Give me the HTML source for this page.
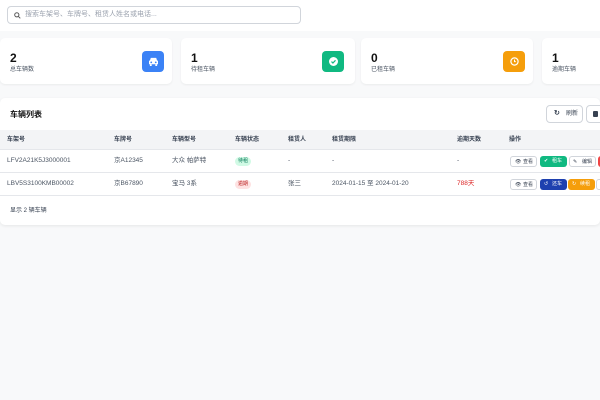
<!DOCTYPE html>
<html><head><meta charset="utf-8"><style>
*{box-sizing:border-box;margin:0;padding:0}
body{width:600px;height:400px;overflow:hidden;background:#f8f9fa;font-family:"Liberation Sans","Noto Sans CJK SC",sans-serif;color:#1f2937;position:relative}
.top{position:absolute;left:0;top:0;width:600px;height:31px;background:#fff}
.search{position:absolute;left:7px;top:6px;width:294px;height:18px;border:1px solid #d1d5db;border-radius:4px;background:#fff;font-size:7px;color:#9ca3af;padding-left:17px;line-height:16px}
.search svg{position:absolute;left:6px;top:5px}
.card{position:absolute;top:38px;height:46px;background:#fff;border-radius:5px;box-shadow:0 1px 2px rgba(0,0,0,.06)}
.card .n{position:absolute;left:10px;top:13px;font-size:12px;line-height:14px;font-weight:bold;color:#111}
.card .l{position:absolute;left:10px;top:28px;font-size:6px;line-height:8px;color:#4b5563}
.card .ic{position:absolute;left:142px;top:13px;width:22px;height:21px;border-radius:4px;display:flex;align-items:center;justify-content:center}
.panel{position:absolute;left:0;top:98px;width:600px;height:127px;background:#fff;border-radius:5px;box-shadow:0 1px 3px rgba(0,0,0,.08)}
.title{position:absolute;left:10px;top:12px;font-size:8px;line-height:10px;font-weight:bold;color:#111}
.btn{position:absolute;top:7px;height:18px;border:1px solid #d1d5db;border-radius:4px;background:#fff;font-size:6px;color:#374151;line-height:16px;padding-left:19px}
.thead{position:absolute;left:0;top:32px;width:600px;height:20px;background:#f3f4f6;border-bottom:1px solid #e5e7eb}
.row{position:absolute;left:0;width:600px;height:23px;border-bottom:1px solid #e5e7eb}
.c{position:absolute;font-size:6.5px;line-height:8px;color:#4b5563;top:7px;white-space:nowrap}
.thead .c{top:6px;font-weight:bold;color:#374151;font-size:6px}
.tag{position:absolute;top:7px;height:9px;border-radius:5px;font-size:5px;line-height:9px;padding:0 3px}
.ab{position:absolute;top:6px;height:11px;border-radius:3px;font-size:5px;line-height:10px;padding-left:12px;width:27px;color:#fff}
.ab span{line-height:10px}
.foot{position:absolute;left:10px;top:109px;font-size:6px;line-height:8px;color:#374151}
</style></head><body>
<div class="top"><div class="search"><svg width="7" height="7" viewBox="0 0 10 10"><circle cx="4" cy="4" r="3" fill="none" stroke="#555" stroke-width="1.4"/><path d="M6.3 6.3L9 9" stroke="#555" stroke-width="1.4"/></svg>搜索车架号、车牌号、租赁人姓名或电话...</div></div>

<div class="card" style="left:0;width:172px"><div class="n">2</div><div class="l">总车辆数</div><div class="ic" style="background:#3b82f6;left:142px"><svg width="11" height="9" viewBox="0 0 12 10"><path d="M2 4L3 1h6l1 3h1v4H1V4z" fill="#fff"/><circle cx="3.5" cy="6" r="1" fill="#3b82f6"/><circle cx="8.5" cy="6" r="1" fill="#3b82f6"/><rect x="2" y="8" width="2" height="2" fill="#fff"/><rect x="8" y="8" width="2" height="2" fill="#fff"/></svg></div></div>
<div class="card" style="left:181px;width:174px"><div class="n">1</div><div class="l">待租车辆</div><div class="ic" style="background:#10b981;left:141px"><svg width="9" height="9"><circle cx="4.5" cy="4.5" r="4.5" fill="#fff"/><path d="M2.5 4.6l1.4 1.4 2.6-2.7" stroke="#10b981" stroke-width="1.2" fill="none"/></svg></div></div>
<div class="card" style="left:361px;width:172px"><div class="n">0</div><div class="l">已租车辆</div><div class="ic" style="background:#f59e0b;left:142px"><svg width="9" height="9"><circle cx="4.5" cy="4.5" r="3.6" fill="none" stroke="#fff" stroke-width="1.2"/><path d="M4.5 2.6v2h1.3" stroke="#fff" stroke-width="1" fill="none"/></svg></div></div>
<div class="card" style="left:542px;width:70px"><div class="n">1</div><div class="l">逾期车辆</div></div>

<div class="panel">
<div class="title">车辆列表</div>
<div class="btn" style="left:546px;width:37px"><span style="position:absolute;left:7px;top:0;font-size:7px;font-weight:bold">↻</span>刷新</div>
<div class="btn" style="left:586px;width:30px"><span style="position:absolute;left:6px;top:5px;width:5px;height:6px;background:#374151;border-radius:1px"></span></div>
<div class="thead">
<div class="c" style="left:7px">车架号</div><div class="c" style="left:114px">车牌号</div><div class="c" style="left:172px">车辆型号</div><div class="c" style="left:235px">车辆状态</div><div class="c" style="left:288px">租赁人</div><div class="c" style="left:332px">租赁期限</div><div class="c" style="left:457px">逾期天数</div><div class="c" style="left:509px">操作</div>
</div>
<div class="row" style="top:52px">
<div class="c" style="left:7px">LFV2A21K5J3000001</div><div class="c" style="left:114px">京A12345</div><div class="c" style="left:172px">大众 帕萨特</div>
<div class="tag" style="left:235px;background:#d1fae5;color:#047857">待租</div>
<div class="c" style="left:288px">-</div><div class="c" style="left:332px">-</div><div class="c" style="left:457px">-</div>
<div class="ab" style="left:510px;background:#fff;border:1px solid #d1d5db;color:#374151">查看<span style="position:absolute;left:4px;top:0">👁</span></div>
<div class="ab" style="left:540px;background:#10b981">租车<span style="position:absolute;left:4px;top:0">✔</span></div>
<div class="ab" style="left:569px;background:#fff;border:1px solid #d1d5db;color:#374151">编辑<span style="position:absolute;left:3px;top:0">✎</span></div>
<div class="ab" style="left:598px;background:#ef4444"></div>
</div>
<div class="row" style="top:75px">
<div class="c" style="left:7px">LBV5S3100KMB00002</div><div class="c" style="left:114px">京B67890</div><div class="c" style="left:172px">宝马 3系</div>
<div class="tag" style="left:235px;background:#fee2e2;color:#b91c1c">逾期</div>
<div class="c" style="left:288px">张三</div><div class="c" style="left:332px">2024-01-15 至 2024-01-20</div><div class="c" style="left:457px;color:#dc2626">788天</div>
<div class="ab" style="left:510px;background:#fff;border:1px solid #d1d5db;color:#374151">查看<span style="position:absolute;left:4px;top:0">👁</span></div>
<div class="ab" style="left:540px;background:#1e40af">还车<span style="position:absolute;left:4px;top:0">↺</span></div>
<div class="ab" style="left:568px;background:#f59e0b">续租<span style="position:absolute;left:4px;top:0">↻</span></div>
<div class="ab" style="left:596px;background:#fff;border:1px solid #d1d5db"></div>
</div>
<div class="foot">显示 2 辆车辆</div>
</div>
</body></html>
